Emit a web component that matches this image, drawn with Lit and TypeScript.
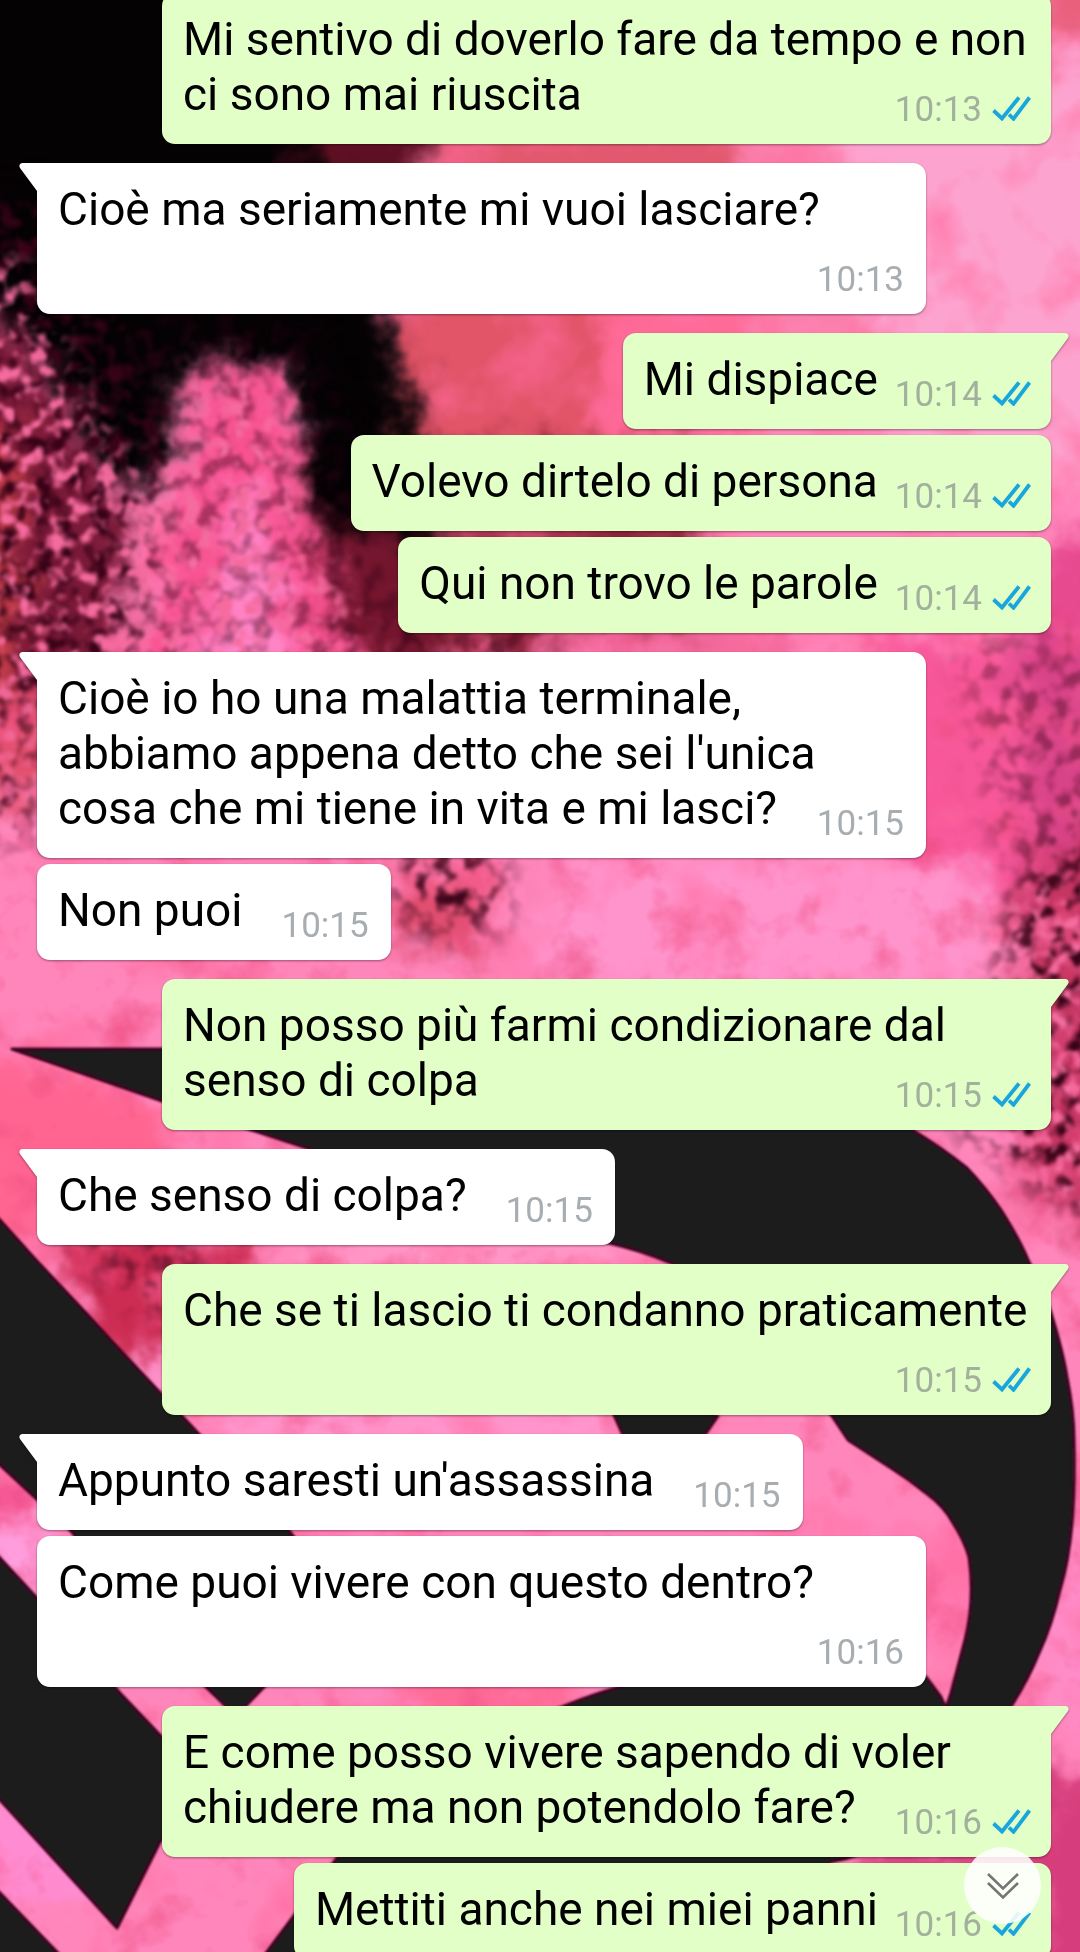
import { LitElement, html, svg, css, nothing } from "lit";
import { customElement, property } from "lit/decorators.js";
import { classMap } from "lit/directives/class-map.js";

interface Message {
  text: string;
  time: string;
  mine: boolean;
  tail: boolean;
}

const MESSAGES: Message[] = [
  { text: "Mi sentivo di doverlo fare da tempo e non ci sono mai riuscita", time: "10:13", mine: true, tail: false },
  { text: "Cioè ma seriamente mi vuoi lasciare?", time: "10:13", mine: false, tail: true },
  { text: "Mi dispiace", time: "10:14", mine: true, tail: true },
  { text: "Volevo dirtelo di persona", time: "10:14", mine: true, tail: false },
  { text: "Qui non trovo le parole", time: "10:14", mine: true, tail: false },
  { text: "Cioè io ho una malattia terminale, abbiamo appena detto che sei l'unica cosa che mi tiene in vita e mi lasci?", time: "10:15", mine: false, tail: true },
  { text: "Non puoi", time: "10:15", mine: false, tail: false },
  { text: "Non posso più farmi condizionare dal senso di colpa", time: "10:15", mine: true, tail: true },
  { text: "Che senso di colpa?", time: "10:15", mine: false, tail: true },
  { text: "Che se ti lascio ti condanno praticamente", time: "10:15", mine: true, tail: true },
  { text: "Appunto saresti un'assassina", time: "10:15", mine: false, tail: true },
  { text: "Come puoi vivere con questo dentro?", time: "10:16", mine: false, tail: false },
  { text: "E come posso vivere sapendo di voler chiudere ma non potendolo fare?", time: "10:16", mine: true, tail: true },
  { text: "Mettiti anche nei miei panni", time: "10:16", mine: true, tail: false },
];

/* Painted backdrop: pink powder clouds with dark lettering over them. */
@customElement("chat-wallpaper")
export class ChatWallpaper extends LitElement {
  static styles = css`
    :host {
      display: block;
    }
    .art {
      display: block;
      width: 100%;
      height: 100%;
    }
  `;

  private clouds = svg`
    <g filter="url(#soft)">
      <rect x="-60" y="-60" width="1200" height="2080" fill="#ff86bb" />
      <path d="M380-60H1140V340H380z" fill="#fb7fac" />
      <path d="M840 60H1140V480H900z" fill="#fda3cf" />
      <path d="M1040-60H1140V30H1040z" fill="#e8607c" />
      <path d="M430 120H740V220H430z" fill="#e2596f" />
      <path d="M390 290H640L680 660H330z" fill="#e25468" />
      <path d="M600 300H760V440H600z" fill="#ff6a98" />
      <path d="M300 450H700V660H300z" fill="#8c2238" />
      <path d="M540 620H780V670H540z" fill="#f0689a" />
      <path d="M860 630H1140V900H900z" fill="#f8589a" />
      <path d="M1010 620H1140V860H1030z" fill="#d94489" />
      <path d="M1030 540H1140V650H1030z" fill="#e84a90" />
      <path d="M1020 880L1140 800V1240L1020 1210z" fill="#c53663" />
      <path d="M-60 640H60V800H-60z" fill="#e2506e" />
      <path d="M-60 1060H60L170 1110V1200L60 1240H-60z" fill="#ff6590" />
      <path d="M50 1235H250V1300L110 1370z" fill="#cc2c52" />
      <path d="M280 1235H620V1275H280z" fill="#ff98c8" />
      <path d="M120 1370L180 1330V1430z" fill="#ff93cc" />
      <path d="M560 860H980V990H540z" fill="#ff93cb" />
      <path d="M390 870H490V950H400z" fill="#e04e70" />
      <path d="M200 1410H620V1440H200z" fill="#ff9ad2" />
      <path d="M800 1530H1000V1640H800z" fill="#ff79b0" />
      <path d="M-60 1470H40V1520H-60z" fill="#f2518e" />
      <path d="M-60 1530H60V1600H-60z" fill="#ff9ede" />
      <path d="M400 1675H580V1712H400z" fill="#ff6590" />
      <path d="M-60 1800H60L110 1900H-60z" fill="#ff8cd2" />
      <path d="M1045 1560H1140V1720H1040z" fill="#ff8cc8" />
    </g>
    <rect width="1080" height="1952" filter="url(#mist-light)" />
    <rect y="600" width="1080" height="1352" filter="url(#mist-red)" />
    <g filter="url(#soft)">
      <path d="M220 100H440L400 230H220z" fill="#5e1022" />
      <path d="M1030 1780H1140V2020H1030z" fill="#d63d7c" />
      <path d="M860 1840H1100V1880H860z" fill="#d63d7c" />
    </g>
    <g filter="url(#soft)" fill="#050204">
      <path d="M-60-60H300V160L380 240L410 400L440 560L310 560L298 420L284 370L190 370L160 480L110 500L50 380L-60 260z" />
    </g>
    <g filter="url(#soft)">
      <path d="M-60 300L20 330L90 450L130 530L110 690H-60z" fill="#7a1a38" />
      <path d="M-60 420L20 430L20 690H-60z" fill="#c03c48" />
      <path d="M290 540L400 530L460 690H330z" fill="#74162e" />
      <path d="M210 372L275 372L300 490L360 690H130L175 510z" fill="#f85290" />
      <path d="M238 480L260 480L300 690H190z" fill="#ff84c6" />
    </g>`;

  private grain = svg`
    <g filter="url(#grain-dark)">
      <path d="M-60 200H70L160 420L130 690H-60z" />
      <path d="M120 320L300 320L400 560L460 690H80z" fill-opacity=".4" />
      <path d="M-60 640H40V840H-60z" fill-opacity=".7" />
      <path d="M390 850H500V930H410z" />
      <path d="M1020 880L1140 780V1250L960 1130z" />
      <path d="M960 640H1140V860H1000z" fill-opacity=".4" />
      <path d="M60 1240H200V1350z" fill-opacity=".6" />
      <path d="M380 630H540V660H380z" fill-opacity=".8" />
    </g>
    <g filter="url(#grain-light)">
      <path d="M-60 250L20 260L90 410L150 490L120 690H-60z" />
      <path d="M190 365L270 365L320 560L400 690H110z" />
      <path d="M1000 880H1140V1250L1000 1180z" />
      <path d="M-60 640H50V860H-60z" fill-opacity=".8" />
    </g>`;

  private lettering = svg`
    <g fill="#1c1c1b" stroke="#3c0420" stroke-width="3" stroke-linejoin="round" filter="url(#edge)">
      <path d="M12 1049H760C850 1080 880 1108 914 1131Q942 1148 967 1168Q986 1188 1001 1210Q1019 1238 1029 1262Q1044 1292 1051 1313Q1063 1352 1067 1377Q1074 1412 1074 1440Q1075 1490 1072 1523Q1069 1560 1060 1590Q1052 1625 1039 1653Q1028 1680 1012 1705L980 1780Q900 1850 830 1862L700 1980H246L337 1858L480 1745Q560 1704 616 1688L760 1650L926 1677L941 1697L946 1708L951 1693L965 1640Q975 1600 969 1557Q964 1540 953 1523Q944 1506 926 1493Q910 1480 891 1468L848 1440L832 1416L780 1350Q730 1290 671 1263Q640 1250 609 1243Q450 1195 310 1149L162 1101z" />
      <path d="M605 1395L718 1416L700 1442H626z" />
      <path d="M-20 1199L0 1220L36 1260L86 1313L120 1350L198 1433L290 1532L340 1600L263 1688L236 1716L207 1688L70 1530L0 1465L-20 1450z" />
      <path d="M-20 1536L0 1558L36 1597L120 1693L160 1735L210 1780L160 1842L117 1928L0 1800L-20 1780z" />
      <path d="M-20 1872L0 1893L57 1952L80 1980H-20z" />
    </g>`;

  render() {
    return html`
      <svg class="art" viewBox="0 0 1080 1952" preserveAspectRatio="xMidYMid slice" aria-hidden="true">
        <defs>
          <filter id="soft" x="-10%" y="-10%" width="120%" height="120%" color-interpolation-filters="sRGB">
            <feGaussianBlur stdDeviation="14" result="b" />
            <feTurbulence type="fractalNoise" baseFrequency="0.03" numOctaves="3" seed="4" result="t" />
            <feDisplacementMap in="b" in2="t" scale="60" xChannelSelector="R" yChannelSelector="G" />
          </filter>
          <filter id="mist-light" x="0" y="0" width="100%" height="100%" color-interpolation-filters="sRGB">
            <feTurbulence type="fractalNoise" baseFrequency="0.012" numOctaves="4" seed="7" />
            <feColorMatrix values="0 0 0 0 1  0 0 0 0 .42  0 0 0 0 .62  0 0 2 0 -1" />
          </filter>
          <filter id="mist-red" x="0" y="0" width="100%" height="100%" color-interpolation-filters="sRGB">
            <feTurbulence type="fractalNoise" baseFrequency="0.02" numOctaves="4" seed="31" />
            <feColorMatrix values="0 0 0 0 .93  0 0 0 0 .3  0 0 0 0 .5  1.8 0 0 0 -.95" />
          </filter>
          <filter id="grain-dark" x="-5%" y="-5%" width="110%" height="110%" color-interpolation-filters="sRGB">
            <feGaussianBlur in="SourceAlpha" stdDeviation="18" result="b" />
            <feTurbulence type="fractalNoise" baseFrequency="0.055" numOctaves="2" seed="9" />
            <feColorMatrix values="0 0 0 0 .22  0 0 0 0 .01  0 0 0 0 .09  4.2 0 0 0 -1.9" />
            <feGaussianBlur stdDeviation="1.5" />
            <feComposite in2="b" operator="in" />
          </filter>
          <filter id="grain-light" x="-5%" y="-5%" width="110%" height="110%" color-interpolation-filters="sRGB">
            <feGaussianBlur in="SourceAlpha" stdDeviation="14" result="b" />
            <feTurbulence type="fractalNoise" baseFrequency="0.06" numOctaves="2" seed="23" />
            <feColorMatrix values="0 0 0 0 .96  0 0 0 0 .42  0 0 0 0 .62  0 4.6 0 0 -2.3" />
            <feGaussianBlur stdDeviation="1.5" />
            <feComposite in2="b" operator="in" />
          </filter>
          <filter id="edge" x="-5%" y="-5%" width="110%" height="110%">
            <feGaussianBlur stdDeviation="1.2" />
          </filter>
        </defs>
        ${this.clouds}${this.grain}${this.lettering}
      </svg>
    `;
  }
}

@customElement("chat-bubble")
export class ChatBubble extends LitElement {
  @property({ attribute: false }) message!: Message;

  static styles = css`
    :host {
      display: flex;
    }
    .bubble {
      position: relative;
      display: flow-root;
      box-sizing: border-box;
      max-width: calc(100% - 125px);
      padding: 19px 20px 14px 21px;
      border-radius: 13px;
      background: #fff;
      filter: drop-shadow(0 1px 1px rgba(0, 0, 0, 0.4));
    }
    .mine {
      margin-left: auto;
      background: #e1ffc7;
    }
    .tailed {
      border-top-left-radius: 0;
    }
    .mine.tailed {
      border-top-left-radius: 13px;
      border-top-right-radius: 0;
    }
    .text {
      font-size: 46px;
      line-height: 55px;
      color: #000;
    }
    .meta {
      float: right;
      display: flex;
      gap: 10px;
      margin: 22px 2px 0 39px;
      font-size: 35px;
      line-height: 41px;
      color: #a7adb0;
    }
    .mine .meta {
      margin-left: 17px;
      margin-right: 0;
      color: #a3b09d;
    }
    .ticks {
      display: block;
      width: 39px;
      height: 25px;
      margin-top: 7px;
    }
    .tail {
      position: absolute;
      top: 0;
      left: -19px;
      width: 20px;
      height: 29px;
      fill: #fff;
    }
    .mine .tail {
      left: auto;
      right: -19px;
      fill: #e1ffc7;
    }
  `;

  render() {
    const { text, time, mine, tail } = this.message;
    return html`
      <div class=${classMap({ bubble: true, mine, tailed: tail })}>
        ${tail
          ? html`<svg class="tail" viewBox="0 0 20 29" aria-hidden="true">
              <path d=${mine ? "M0 0H16Q20 1 18 5L1 28V29H0z" : "M20 0H4Q0 1 2 5L19 28V29H20z"} />
            </svg>`
          : nothing}
        <span class="text">${text}</span><span class="meta">
          <time>${time}</time>
          ${mine
            ? html`<svg class="ticks" viewBox="0 0 39 25" role="img" aria-label="Letto" fill="none" stroke="#18a6dd" stroke-width="3.8">
                <path d="M1.5 14.5L10 22.5L27 1.5" />
                <path d="M17 18.5L21.5 22.8L37.5 1.5" />
              </svg>`
            : nothing}
        </span>
      </div>
    `;
  }
}

@customElement("app-root")
export class AppRoot extends LitElement {
  static styles = css`
    :host {
      position: relative;
      display: block;
      height: 100vh;
      overflow: hidden;
      font-family: Roboto, "Liberation Sans", sans-serif;
      background: #ff86bb;
    }
    .wallpaper {
      position: absolute;
      inset: 0;
    }
    .thread {
      position: relative;
      display: flex;
      flex-direction: column;
      gap: 6px;
      margin: -7px 0 0;
      padding: 0 29px 0 37px;
      list-style: none;
    }
    .turn {
      margin-top: 13px;
    }
    .jump {
      position: absolute;
      right: 39px;
      bottom: 28px;
      display: grid;
      place-items: center;
      width: 77px;
      height: 77px;
      padding: 0;
      border: 0;
      border-radius: 50%;
      background: rgba(255, 255, 255, 0.88);
    }
    .chevrons {
      width: 32px;
      height: 28px;
    }
  `;

  render() {
    return html`
      <chat-wallpaper class="wallpaper"></chat-wallpaper>
      <ul class="thread">
        ${MESSAGES.map(
          (message, i) => html`
            <li class=${classMap({ turn: i > 0 && MESSAGES[i - 1].mine !== message.mine })}>
              <chat-bubble .message=${message}></chat-bubble>
            </li>
          `
        )}
      </ul>
      <button class="jump" type="button" aria-label="Vai in fondo">
        <svg class="chevrons" viewBox="0 0 32 28" fill="none" stroke="#757575" stroke-width="2.6" aria-hidden="true">
          <path d="M1 2L16 16.5L31 2" />
          <path d="M1 11L16 25.5L31 11" />
        </svg>
      </button>
    `;
  }
}
